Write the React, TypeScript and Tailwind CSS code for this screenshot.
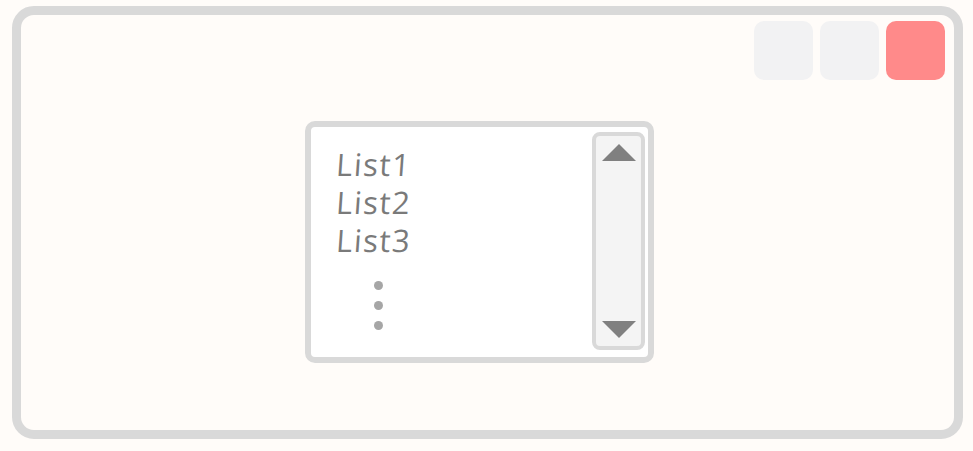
export default function App() {
  return (
    <div className="w-[973px] h-[451px] bg-[#fffcf9] pt-[6px] pl-[12px]">
      <div className="w-[951px] h-[433px] border-[9px] border-[#d9d9d9] rounded-[22px] bg-[#fffcf9] pt-[6px] pr-[9px]">
        <div className="flex justify-end gap-[7px]">
          <div className="w-[59px] h-[59px] rounded-[10px] bg-[#f2f2f3]" />
          <div className="w-[59px] h-[59px] rounded-[10px] bg-[#f2f2f3]" />
          <div className="w-[59px] h-[59px] rounded-[10px] bg-[#ff8a8a]" />
        </div>

        <div className="ml-[284px] mt-[41px] w-[349px] h-[242px] border-[6px] border-[#d9d9d9] rounded-[10px] bg-white flex pt-[5px] pr-[3px] pb-[7px]">
          <div className="flex-1 pl-[24px] pt-[13px] font-['Open_Sans',sans-serif] font-medium text-[#7a7a7a] text-[31px] leading-[38px] tracking-[1.5px]">
            <div className="skew-x-[-4deg] origin-bottom-left">List1</div>
            <div className="skew-x-[-4deg] origin-bottom-left">List2</div>
            <div className="skew-x-[-4deg] origin-bottom-left">List3</div>
            <div className="flex flex-col gap-[11px] mt-[22px] ml-[39px]">
              <span className="w-[9px] h-[9px] rounded-full bg-[#a6a6a6]" />
              <span className="w-[9px] h-[9px] rounded-full bg-[#a6a6a6]" />
              <span className="w-[9px] h-[9px] rounded-full bg-[#a6a6a6]" />
            </div>
          </div>

          <div className="w-[53px] h-full border-[4px] border-[#d9d9d9] rounded-[8px] bg-[#f4f4f4] flex flex-col items-center justify-between pt-[8px] pb-[8px]">
            <svg width="34" height="17" viewBox="0 0 34 17">
              <polygon points="17,0 34,17 0,17" fill="#808080" />
            </svg>
            <svg width="34" height="17" viewBox="0 0 34 17">
              <polygon points="0,0 34,0 17,17" fill="#808080" />
            </svg>
          </div>
        </div>
      </div>
    </div>
  );
}
